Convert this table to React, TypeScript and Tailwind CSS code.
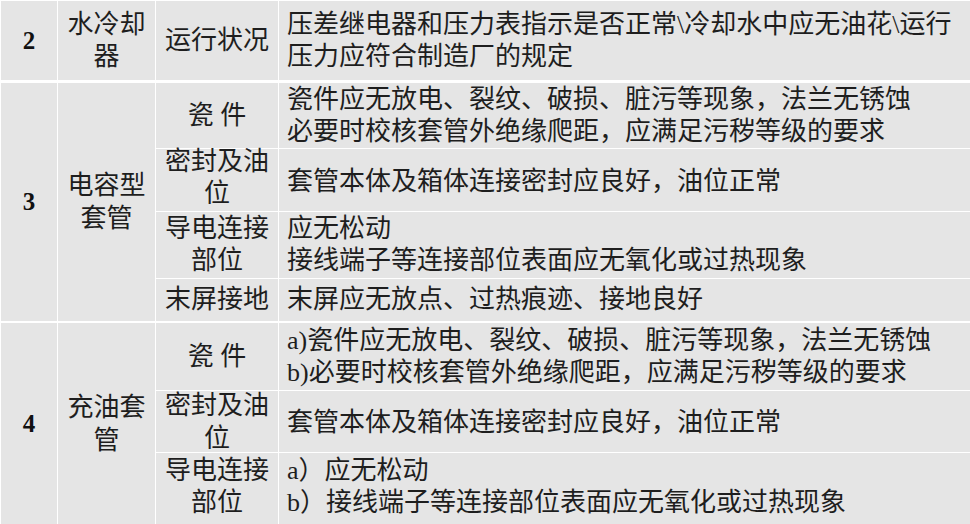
const font = "font-['Liberation_Serif','Noto_Sans_CJK_SC',serif] text-[#1e1e1e]"

function Num({ n }: { n: string }) {
  return (
    <div className="bg-[#e5e5e5] flex items-center justify-center font-['Liberation_Serif',serif] font-bold text-[25px] text-[#111] row-span-full">
      {n}
    </div>
  )
}

function Center({ lines, className = "" }: { lines: string[]; className?: string }) {
  return (
    <div className={`bg-[#e5e5e5] flex flex-col items-center justify-center text-center text-[26px] leading-[32px] ${className}`}>
      {lines.map((l, i) => (
        <div key={i} className="whitespace-nowrap">{l}</div>
      ))}
    </div>
  )
}

function Desc({ lines, className = "" }: { lines: string[]; className?: string }) {
  return (
    <div className={`bg-[#e5e5e5] flex flex-col justify-center pl-[8px] text-[26px] leading-[32px] ${className}`}>
      {lines.map((l, i) => (
        <div key={i} className="whitespace-nowrap">{l}</div>
      ))}
    </div>
  )
}

export default function App() {
  return (
    <div className={`w-[970px] h-[524px] overflow-hidden bg-white pt-[1px] pl-[1px] ${font}`}>
      {/* 2 水冷却器 */}
      <div className="grid grid-cols-[56px_97px_122px_1fr] gap-x-[1px] h-[79px]">
        <Num n="2" />
        <Center lines={["水冷却", "器"]} className="leading-[31px]" />
        <Center lines={["运行状况"]} />
        <Desc
          className="leading-[30px]"
          lines={["压差继电器和压力表指示是否正常\\冷却水中应无油花\\运行", "压力应符合制造厂的规定"]}
        />
      </div>

      {/* 3 电容型套管 */}
      <div className="mt-[3px] grid grid-cols-[56px_97px_122px_1fr] grid-rows-[65px_62px_66px_42px] gap-[1px]">
        <div className="bg-[#e5e5e5] row-span-4 flex items-center justify-center font-['Liberation_Serif',serif] font-bold text-[25px] text-[#111]">
          3
        </div>
        <Center lines={["电容型", "套管"]} className="row-span-4 leading-[33px]" />
        <Center lines={["瓷 件"]} />
        <Desc lines={["瓷件应无放电、裂纹、破损、脏污等现象，法兰无锈蚀", "必要时校核套管外绝缘爬距，应满足污秽等级的要求"]} />
        <Center lines={["密封及油", "位"]} className="leading-[30px] pb-[4px]" />
        <Desc lines={["套管本体及箱体连接密封应良好，油位正常"]} className="pt-[4px]" />
        <Center lines={["导电连接", "部位"]} />
        <Desc lines={["应无松动", "接线端子等连接部位表面应无氧化或过热现象"]} />
        <Center lines={["末屏接地"]} />
        <Desc lines={["末屏应无放点、过热痕迹、接地良好"]} />
      </div>

      {/* 4 充油套管 */}
      <div className="mt-[2px] grid grid-cols-[56px_97px_122px_1fr] grid-rows-[67px_61px_71px] gap-[1px]">
        <div className="bg-[#e5e5e5] row-span-3 flex items-center justify-center font-['Liberation_Serif',serif] font-bold text-[25px] text-[#111]">
          4
        </div>
        <Center lines={["充油套", "管"]} className="row-span-3 leading-[33px]" />
        <Center lines={["瓷 件"]} />
        <Desc lines={["a)瓷件应无放电、裂纹、破损、脏污等现象，法兰无锈蚀", "b)必要时校核套管外绝缘爬距，应满足污秽等级的要求"]} />
        <Center lines={["密封及油", "位"]} className="leading-[33px]" />
        <Desc lines={["套管本体及箱体连接密封应良好，油位正常"]} className="pt-[3px]" />
        <Center lines={["导电连接", "部位"]} className="pb-[4px]" />
        <Desc lines={["a）应无松动", "b）接线端子等连接部位表面应无氧化或过热现象"]} className="pb-[4px]" />
      </div>
    </div>
  )
}
